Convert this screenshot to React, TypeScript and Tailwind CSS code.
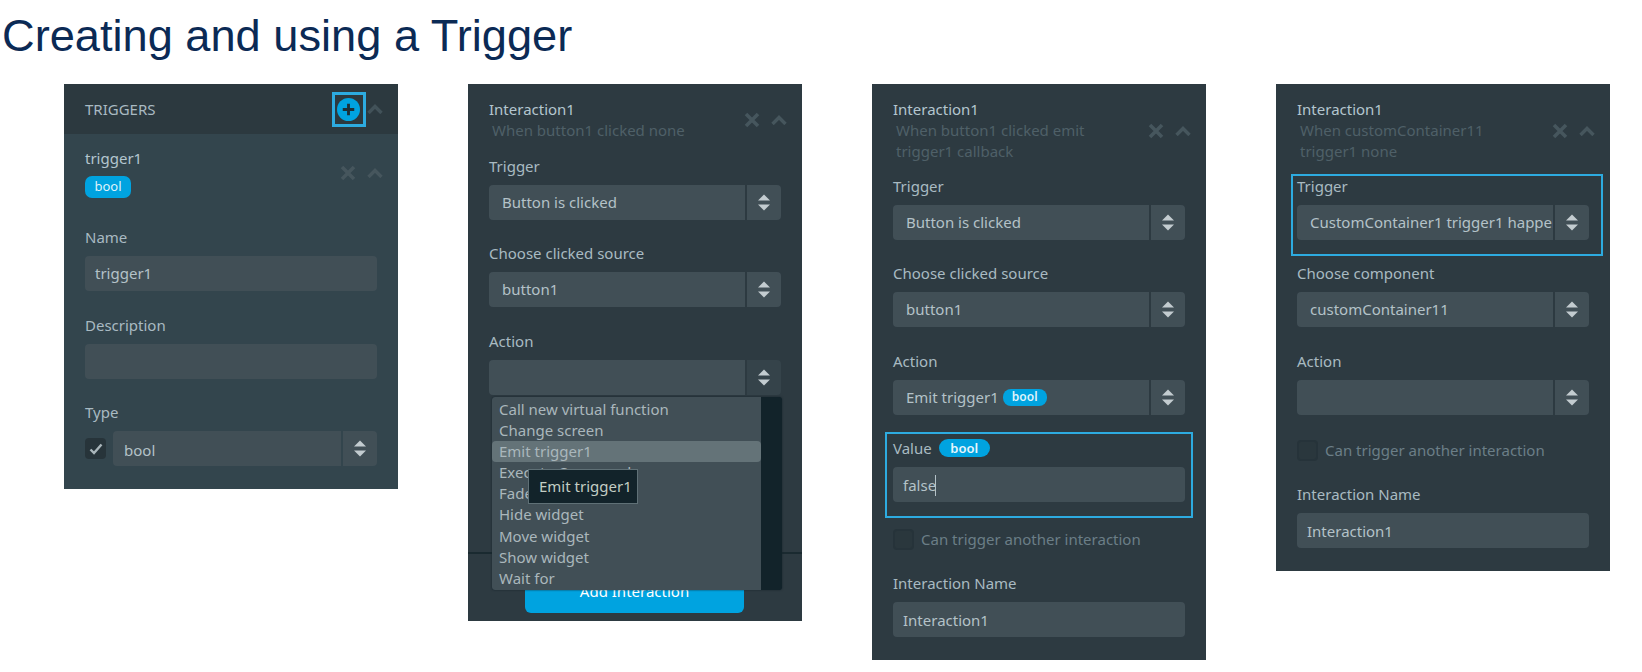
import type { ReactNode } from "react";

function CloseIcon({ color = "#46565d" }: { color?: string }) {
  return (
    <svg width="16" height="16" viewBox="0 0 16 16" fill="none" stroke={color} strokeWidth="3.6">
      <path d="M2 2 L14 14 M14 2 L2 14" />
    </svg>
  );
}

function ChevronIcon({ color = "#46565d" }: { color?: string }) {
  return (
    <svg width="16" height="10" viewBox="0 0 16 10" fill="none" stroke={color} strokeWidth="3.4">
      <path d="M1.5 9 L8 2.5 L14.5 9" />
    </svg>
  );
}

function UpDownIcon() {
  return (
    <svg width="12" height="17" viewBox="0 0 12 17" fill="#c3ccd0">
      <path d="M6 0.5 L12 6.5 L0 6.5 Z" />
      <path d="M0 10.5 L12 10.5 L6 16.5 Z" />
    </svg>
  );
}

function Label({ children }: { children: ReactNode }) {
  return <div className="relative -top-[0.75px] h-5 leading-5 text-[15px] text-[#a9bac2]">{children}</div>;
}

function Select({ children, className = "", dim = false }: { children?: ReactNode; className?: string; dim?: boolean }) {
  return (
    <div className={`flex h-[35px] rounded-[4px] overflow-hidden text-[15px] text-[#b4c2c8] ${className}`}>
      <div className="flex-1 min-w-0 flex items-center gap-[4px] pl-[13px] pr-[2px] bg-[#414f56] whitespace-nowrap overflow-hidden">
        {children}
      </div>
      <div className={`w-[34px] ml-[2px] flex items-center justify-center ${dim ? "bg-[#35434a]" : "bg-[#414f56]"}`}>
        <UpDownIcon />
      </div>
    </div>
  );
}

function Input({ children, low = false }: { children?: ReactNode; low?: boolean }) {
  return (
    <div className={`flex items-center h-[35px] rounded-[4px] pl-[10px] bg-[#414f56] text-[15px] text-[#b4c2c8] ${low ? "pt-[2px]" : ""}`}>
      {children}
    </div>
  );
}

function Field({ label, children, className = "" }: { label: ReactNode; children: ReactNode; className?: string }) {
  return (
    <div className={`relative ${className}`}>
      <Label>{label}</Label>
      <div className="mt-2">{children}</div>
    </div>
  );
}

function InteractionHeader({ title, sub }: { title: string; sub: string }) {
  return (
    <div className="flex items-center justify-between">
      <div className="w-[212px] text-[15px] leading-[21px]">
        <div className="text-[#b4c6cf]">{title}</div>
        <div className="pl-[3px] text-[#4f6068]">{sub}</div>
      </div>
      <div className="flex items-center gap-[11px] mr-[-6px]">
        <CloseIcon />
        <ChevronIcon />
      </div>
    </div>
  );
}

function Check({ label, className = "" }: { label: string; className?: string }) {
  return (
    <div className={`flex items-center gap-[7px] h-[21px] ${className}`}>
      <div className="w-[21px] h-[21px] rounded-[4px] bg-[#2a373d] border-2 border-[#26333a]" />
      <span className="text-[15px] text-[#6b7e87]">{label}</span>
    </div>
  );
}

const panel = "w-[334px] shrink-0 bg-[#2d3a41] px-[21px] pt-[15px] pb-[23px]";

const menuItems = [
  "Call new virtual function",
  "Change screen",
  "Emit trigger1",
  "Execute Command",
  "Fade widget",
  "Hide widget",
  "Move widget",
  "Show widget",
  "Wait for",
];

export default function App() {
  return (
    <div className="w-[1642px] h-[672px] overflow-hidden bg-white font-['Noto_Sans',sans-serif]">
      <h1 className="h-[84px] pl-[2px] pt-[9px] leading-[54px] text-[45.2px] text-[#0b2a55] font-['Liberation_Sans',sans-serif]">
        Creating and using a Trigger
      </h1>
      <div className="flex items-start gap-[70px] pl-[64px]">
        {/* Panel 1 */}
        <div className="w-[334px] shrink-0 bg-[#33454d]">
          <div className="flex items-center justify-between h-[50px] pl-[21px] pr-[15px] bg-[#2c393f]">
            <span className="text-[15px] text-[#a9bac2]">TRIGGERS</span>
            <div className="flex items-center gap-[7.5px]">
              <div className="relative w-[23px] h-[23px]">
                <svg width="23" height="23" viewBox="0 0 24 24">
                  <circle cx="12" cy="12" r="12" fill="#00a3e0" />
                  <path d="M12 6 V18 M6 12 H18" stroke="#1d3038" strokeWidth="3" />
                </svg>
                <div className="absolute -left-[5px] -top-[6px] w-[34px] h-[35px] border-[3px] border-[#2dabe0]" />
              </div>
              <ChevronIcon color="#425259" />
            </div>
          </div>
          <div className="px-[21px] pt-[13.5px] pb-[23px]">
            <div className="flex items-center justify-between">
              <div>
                <div className="text-[15px] leading-[21px] text-[#b4c6cf]">trigger1</div>
                <div className="mt-[7px] flex items-center justify-center w-[46px] h-[22.5px] rounded-[7px] bg-[#00a3e0] text-[13px] text-[#dff3fb]">
                  bool
                </div>
              </div>
              <div className="flex items-center gap-[11px] mr-[-6px]">
                <CloseIcon />
                <ChevronIcon />
              </div>
            </div>
            <Field label="Name" className="mt-[30px]">
              <Input>trigger1</Input>
            </Field>
            <Field label="Description" className="mt-[24.5px]">
              <Input />
            </Field>
            <Field label="Type" className="mt-[24.5px]">
              <div className="flex items-center gap-[7px]">
                <div className="flex items-center justify-center w-[21px] h-[21px] rounded-[4px] bg-[#27343a]">
                  <svg width="14" height="12" viewBox="0 0 14 12" fill="none" stroke="#aab6bb" strokeWidth="2.4">
                    <path d="M1.5 6.5 L5 10 L12.5 1.5" />
                  </svg>
                </div>
                <Select className="flex-1 min-w-0">
                  <span className="mt-[4px] -ml-[2px]">bool</span>
                </Select>
              </div>
            </Field>
          </div>
        </div>

        {/* Panel 2 */}
        <div className={`${panel} h-[537px] !pb-0`}>
          <InteractionHeader title="Interaction1" sub="When button1 clicked none" />
          <Field label="Trigger" className="mt-[15.5px]">
            <Select>Button is clicked</Select>
          </Field>
          <Field label="Choose clicked source" className="mt-[24.5px]">
            <Select>button1</Select>
          </Field>
          <Field label="Action" className="mt-[24.5px]">
            <Select dim />
            <div className="absolute z-10 left-[3px] -right-[1px] top-[65px] h-[193px] flex rounded-[3px] overflow-hidden bg-[#12232a] shadow-[0_0_2px_#14222a]">
              <div className="w-[269px] bg-[#414f56] py-[2px] text-[15px] text-[#aab7bc]">
                {menuItems.map((item) => (
                  <div
                    key={item}
                    className={`h-[21.2px] leading-[21.2px] pl-[7px] rounded-[4px] whitespace-nowrap ${
                      item === "Emit trigger1" ? "bg-[#647378]" : ""
                    }`}
                  >
                    {item}
                  </div>
                ))}
              </div>
            </div>
            <div className="absolute z-20 left-[39px] top-[137px] w-[110px] h-[35px] flex items-center pl-[10px] bg-[#12232a] border border-[#5f7076] text-[15px] whitespace-nowrap text-[#c3cdc4]">
              Emit trigger1
            </div>
          </Field>
          <div className="-mx-[21px] mt-[157px] h-[2px] bg-[#1a2a30]" />
          <div className="mt-[18px] ml-[36px] w-[219px] h-[41px] flex items-center justify-center pb-[2px] rounded-[6px] bg-[#00a3e0] text-[15px] text-white">
            Add Interaction
          </div>
        </div>

        {/* Panel 3 */}
        <div className={panel}>
          <InteractionHeader title="Interaction1" sub="When button1 clicked emit trigger1 callback" />
          <Field label="Trigger" className="mt-[14.5px]">
            <Select>Button is clicked</Select>
          </Field>
          <Field label="Choose clicked source" className="mt-[24.5px]">
            <Select>button1</Select>
          </Field>
          <Field label="Action" className="mt-[24.5px]">
            <Select>
              Emit trigger1
              <span className="flex items-center justify-center w-[44px] h-[17px] rounded-[8px] bg-[#00a3e0] text-[12px] font-semibold text-[#dff3fb]">
                bool
              </span>
            </Select>
          </Field>
          <Field
            className="mt-[24.5px]"
            label={
              <span className="flex items-center gap-[7px]">
                Value
                <span className="flex items-center justify-center w-[51px] h-[18px] rounded-[9px] bg-[#00a3e0] text-[13px] font-semibold text-[#e6f6fc]">
                  bool
                </span>
              </span>
            }
          >
            <Input low>
              false
              <span className="ml-[-1px] w-px h-[21px] bg-[#b4c2c8]" />
            </Input>
            <div className="absolute -left-[8px] -right-[8px] -top-[7.5px] -bottom-[16px] border-2 border-[#2dabe0]" />
          </Field>
          <Check label="Can trigger another interaction" className="mt-[27px]" />
          <Field label="Interaction Name" className="mt-6">
            <Input low>Interaction1</Input>
          </Field>
        </div>

        {/* Panel 4 */}
        <div className={panel}>
          <InteractionHeader title="Interaction1" sub="When customContainer11 trigger1 none" />
          <Field label="Trigger" className="mt-[14.5px]">
            <Select>CustomContainer1 trigger1 happens</Select>
            <div className="absolute -left-[6px] -right-[14px] -top-[3px] -bottom-[16.5px] border-2 border-[#2dabe0]" />
          </Field>
          <Field label="Choose component" className="mt-[24.5px]">
            <Select>customContainer11</Select>
          </Field>
          <Field label="Action" className="mt-[24.5px]">
            <Select />
          </Field>
          <Check label="Can trigger another interaction" className="mt-[25.5px]" />
          <Field label="Interaction Name" className="mt-6">
            <Input low>Interaction1</Input>
          </Field>
        </div>
      </div>
    </div>
  );
}
